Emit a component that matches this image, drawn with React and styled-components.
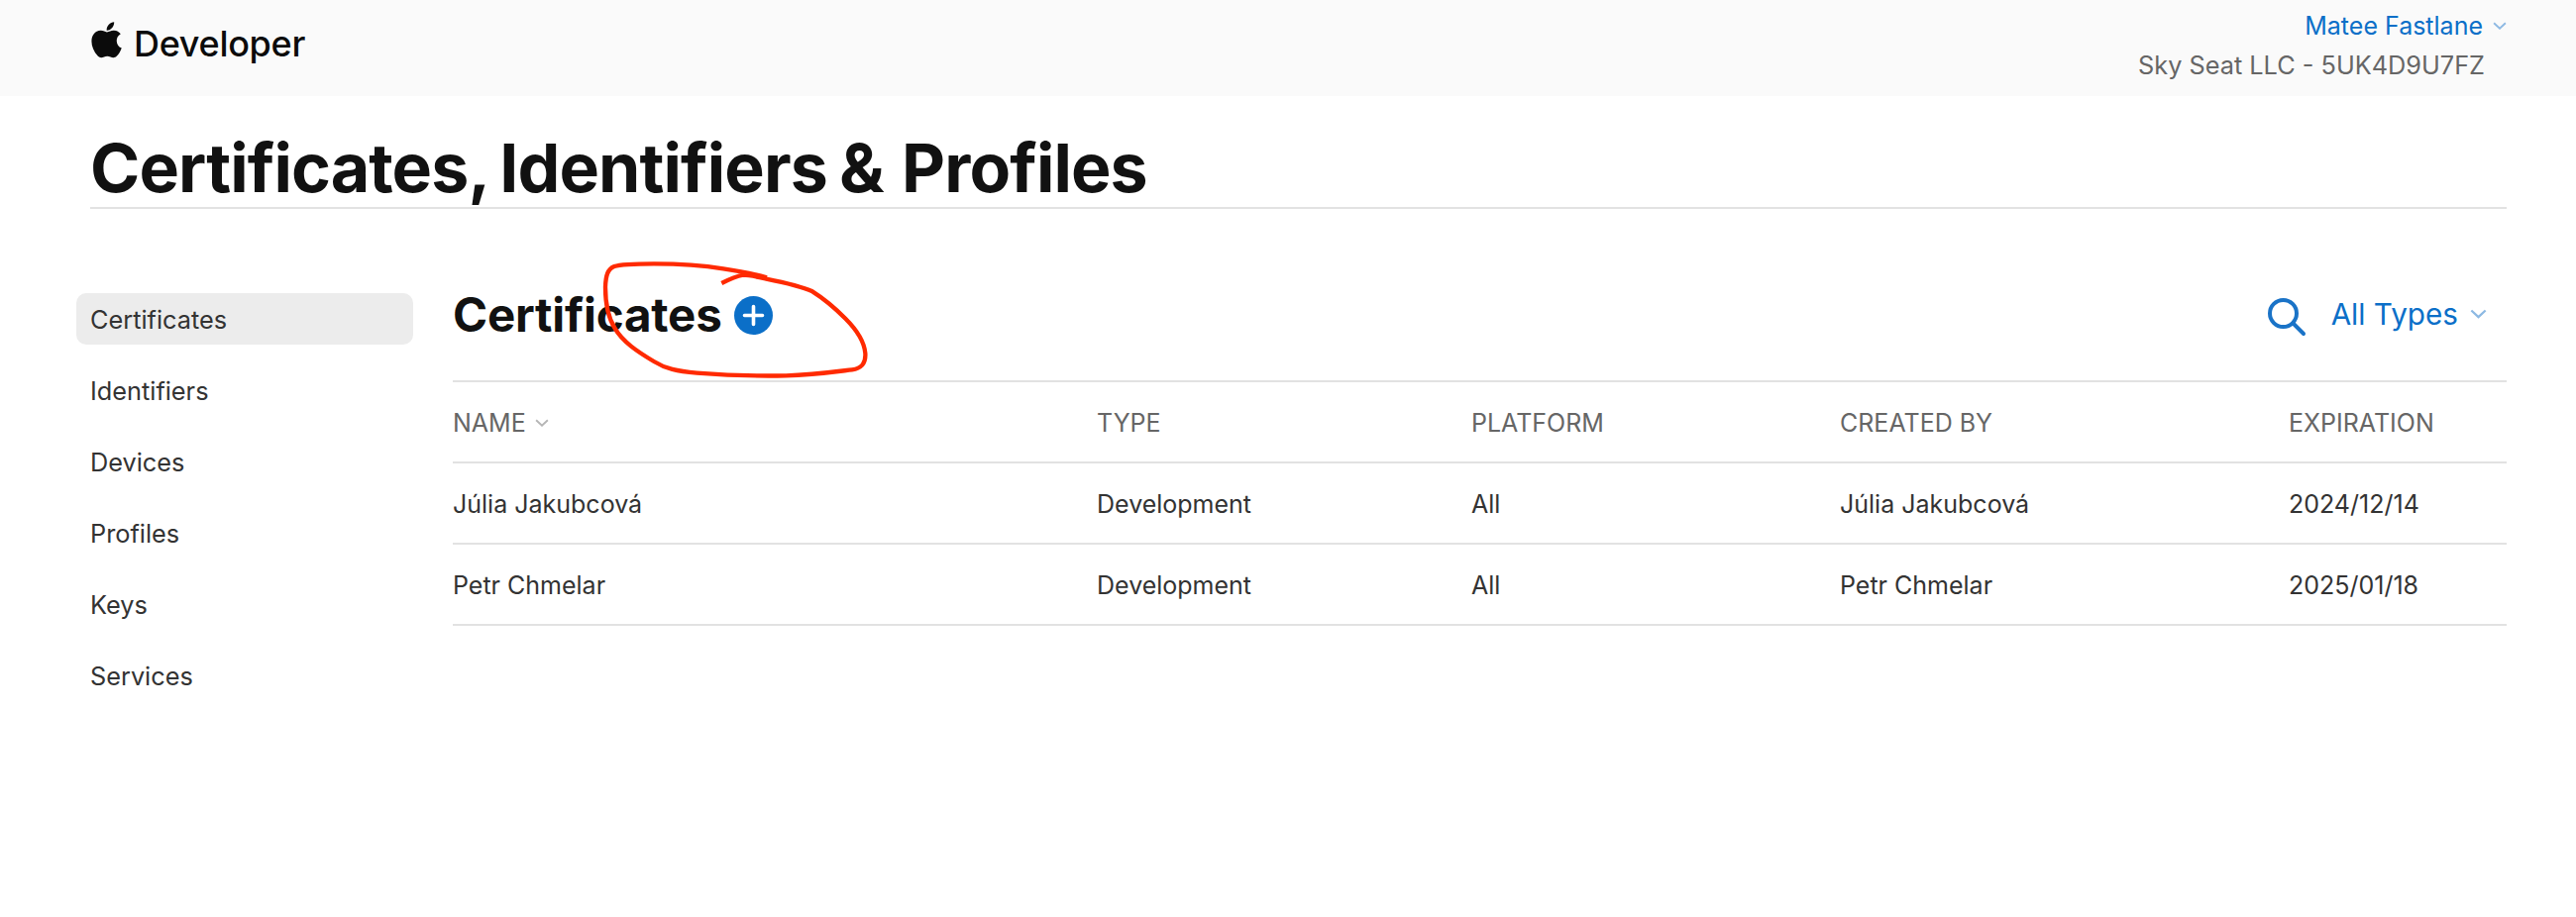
import styled, { createGlobalStyle } from "styled-components";

const GlobalStyle = createGlobalStyle`
  body {
    margin: 0;
    background: #fff;
    font-family: Inter, "Liberation Sans", sans-serif;
  }
`;

const Page = styled.div`
  position: relative;
  height: 926px;
  overflow: hidden;
`;

const TopBar = styled.header`
  display: flex;
  justify-content: space-between;
  height: 97px;
  padding: 0 70px 0 91px;
  background: #fafafa;
`;

const Brand = styled.div`
  display: flex;
  align-items: center;
  gap: 12px;
  height: 88px;
  color: #0b0b0b;
  font-size: 36px;
  font-weight: 500;
  letter-spacing: -0.3px;
`;

const AccountBlock = styled.div`
  display: flex;
  flex-direction: column;
  align-items: flex-end;
  padding-top: 9px;
  font-size: 25px;
  line-height: 34px;
`;

const AccountName = styled.div`
  display: flex;
  align-items: center;
  gap: 10px;
  color: #0b6fc8;
`;

const TeamName = styled.div`
  margin-right: 22px;
  margin-top: 6px;
  color: #666;
  font-size: 25.3px;
`;

const PageTitle = styled.h1`
  margin: 0 70px 0 91px;
  padding: 38px 0 6px;
  border-bottom: 2px solid #e2e2e2;
  color: #111;
  font-size: 68px;
  font-weight: 700;
  line-height: 68px;
  letter-spacing: -0.9px;
  word-spacing: -3px;
`;

const TitleAmp = styled.span`
  margin-right: 6px;
`;

const Columns = styled.div`
  display: flex;
  gap: 40px;
  margin: 85px 70px 0 77px;
`;

const SideNav = styled.nav`
  display: flex;
  flex-direction: column;
  gap: 20px;
  width: 340px;
  flex: none;
`;

const NavItem = styled.a`
  display: flex;
  align-items: center;
  height: 52px;
  padding: 0 14px;
  border-radius: 10px;
  background: ${(p) => (p.$active ? "#ececec" : "transparent")};
  color: #333;
  font-size: 25.3px;
`;

const Content = styled.main`
  flex: 1;
  min-width: 0;
`;

const SectionHeader = styled.div`
  display: flex;
  align-items: center;
  justify-content: space-between;
  height: 82px;
  margin-top: -20px;
  padding-bottom: 26px;
  border-bottom: 2px solid #e2e2e2;
`;

const SectionTitle = styled.div`
  display: flex;
  align-items: center;
  gap: 12px;
`;

const Heading = styled.h2`
  margin: 0;
  color: #111;
  font-size: 47.5px;
  font-weight: 700;
  letter-spacing: -0.2px;
`;

const PlusIcon = styled.svg`
  margin-top: 3px;
`;

const Filters = styled.div`
  display: flex;
  align-items: center;
  gap: 25px;
  padding-right: 20px;
  color: #0b6fc8;
  font-size: 29.7px;
`;

const SearchGlyph = styled.svg`
  margin-top: 5px;
`;

const FilterLabel = styled.div`
  display: flex;
  align-items: center;
  gap: 12px;
`;

const Row = styled.div`
  display: grid;
  grid-template-columns: 650px 378px 372px 453px 1fr;
  align-items: center;
  height: 78px;
  padding-top: 2px;
  border-bottom: 2px solid #e2e2e2;
  color: ${(p) => (p.$head ? "#666" : "#333")};
  font-size: 25px;
`;

const HeadCell = styled.div`
  display: flex;
  align-items: center;
  gap: 9px;
`;

const Scribble = styled.svg`
  position: absolute;
  left: 430px;
  top: 240px;
  width: 480px;
  height: 160px;
  pointer-events: none;
`;

function AppleLogo() {
  return (
    <svg width="32" height="37" viewBox="3.7 3 16 18.3" fill="#0b0b0b" style={{ marginBottom: 7 }}>
      <path d="M17.05 20.28c-.98.95-2.05.8-3.08.35-1.09-.46-2.09-.48-3.24 0-1.44.62-2.2.44-3.06-.35C2.79 15.25 3.51 7.59 9.05 7.31c1.35.07 2.29.74 3.08.8 1.18-.24 2.31-.93 3.57-.84 1.51.12 2.65.72 3.4 1.8-3.12 1.87-2.38 5.98.48 7.13-.57 1.5-1.31 2.99-2.54 4.09zM12.03 7.25c-.15-2.23 1.66-4.07 3.74-4.25.29 2.58-2.34 4.5-3.74 4.25z" />
    </svg>
  );
}

function Chevron({ color, width = 16 }) {
  return (
    <svg width={width} height={width * 0.6} viewBox="0 0 16 10" fill="none">
      <path d="M1 1.5 8 8l7-6.5" stroke={color} strokeWidth="2.2" />
    </svg>
  );
}

function PlusButton() {
  return (
    <PlusIcon width="39" height="39" viewBox="0 0 39 39">
      <circle cx="19.5" cy="19.5" r="19.5" fill="#0b6fc8" />
      <path d="M19.5 10.5v18M10.5 19.5h18" stroke="#fff" strokeWidth="3.6" strokeLinecap="round" />
    </PlusIcon>
  );
}

function SearchIcon() {
  return (
    <SearchGlyph width="40" height="40" viewBox="0 0 40 40" fill="none" stroke="#1a73c7" strokeWidth="4">
      <circle cx="16.5" cy="16.5" r="13.5" />
      <path d="M26.5 26.5 37 37" strokeLinecap="round" />
    </SearchGlyph>
  );
}

const navItems = ["Certificates", "Identifiers", "Devices", "Profiles", "Keys", "Services"];

const certs = [
  { name: "Júlia Jakubcová", type: "Development", platform: "All", by: "Júlia Jakubcová", exp: "2024/12/14" },
  { name: "Petr Chmelar", type: "Development", platform: "All", by: "Petr Chmelar", exp: "2025/01/18" },
];

export default function App() {
  return (
    <Page>
      <GlobalStyle />
      <TopBar>
        <Brand>
          <AppleLogo />
          Developer
        </Brand>
        <AccountBlock>
          <AccountName>
            Matee Fastlane
            <Chevron color="#8db9e3" width={14} />
          </AccountName>
          <TeamName>Sky Seat LLC - 5UK4D9U7FZ</TeamName>
        </AccountBlock>
      </TopBar>

      <PageTitle>
        Certificates, Identifiers <TitleAmp>&amp;</TitleAmp> Profiles
      </PageTitle>

      <Columns>
        <SideNav>
          {navItems.map((item, i) => (
            <NavItem key={item} $active={i === 0}>
              {item}
            </NavItem>
          ))}
        </SideNav>

        <Content>
          <SectionHeader>
            <SectionTitle>
              <Heading>Certificates</Heading>
              <PlusButton />
            </SectionTitle>
            <Filters>
              <SearchIcon />
              <FilterLabel>
                All Types
                <Chevron color="#8db9e3" width={17} />
              </FilterLabel>
            </Filters>
          </SectionHeader>

          <Row $head>
            <HeadCell>
              NAME
              <Chevron color="#b5b5b5" width={14} />
            </HeadCell>
            <div>TYPE</div>
            <div>PLATFORM</div>
            <div>CREATED BY</div>
            <div>EXPIRATION</div>
          </Row>
          {certs.map((c) => (
            <Row key={c.name}>
              <div>{c.name}</div>
              <div>{c.type}</div>
              <div>{c.platform}</div>
              <div>{c.by}</div>
              <div>{c.exp}</div>
            </Row>
          ))}
        </Content>
      </Columns>

      {/* hand drawn red circle round the add button */}
      <Scribble viewBox="0 0 1440 480" fill="none">
        <path
          d="M1032 121C1000 112 960 103 900 94C840 84 760 79 690 79C640 79 590 80 570 87C550 95 544 115 543 150C543 200 553 245 572 275C595 315 640 345 690 375C725 397 760 405 820 410C900 416 1000 420 1090 418C1170 416 1240 406 1290 400C1320 396 1332 380 1330 350C1327 315 1305 280 1270 245C1240 215 1205 185 1170 163C1130 145 1080 135 1030 125C1000 118 980 113 960 113C935 118 915 128 895 138"
          stroke="#ff2a00"
          strokeWidth="13"
          strokeLinecap="butt"
          strokeLinejoin="round"
        />
      </Scribble>
    </Page>
  );
}
